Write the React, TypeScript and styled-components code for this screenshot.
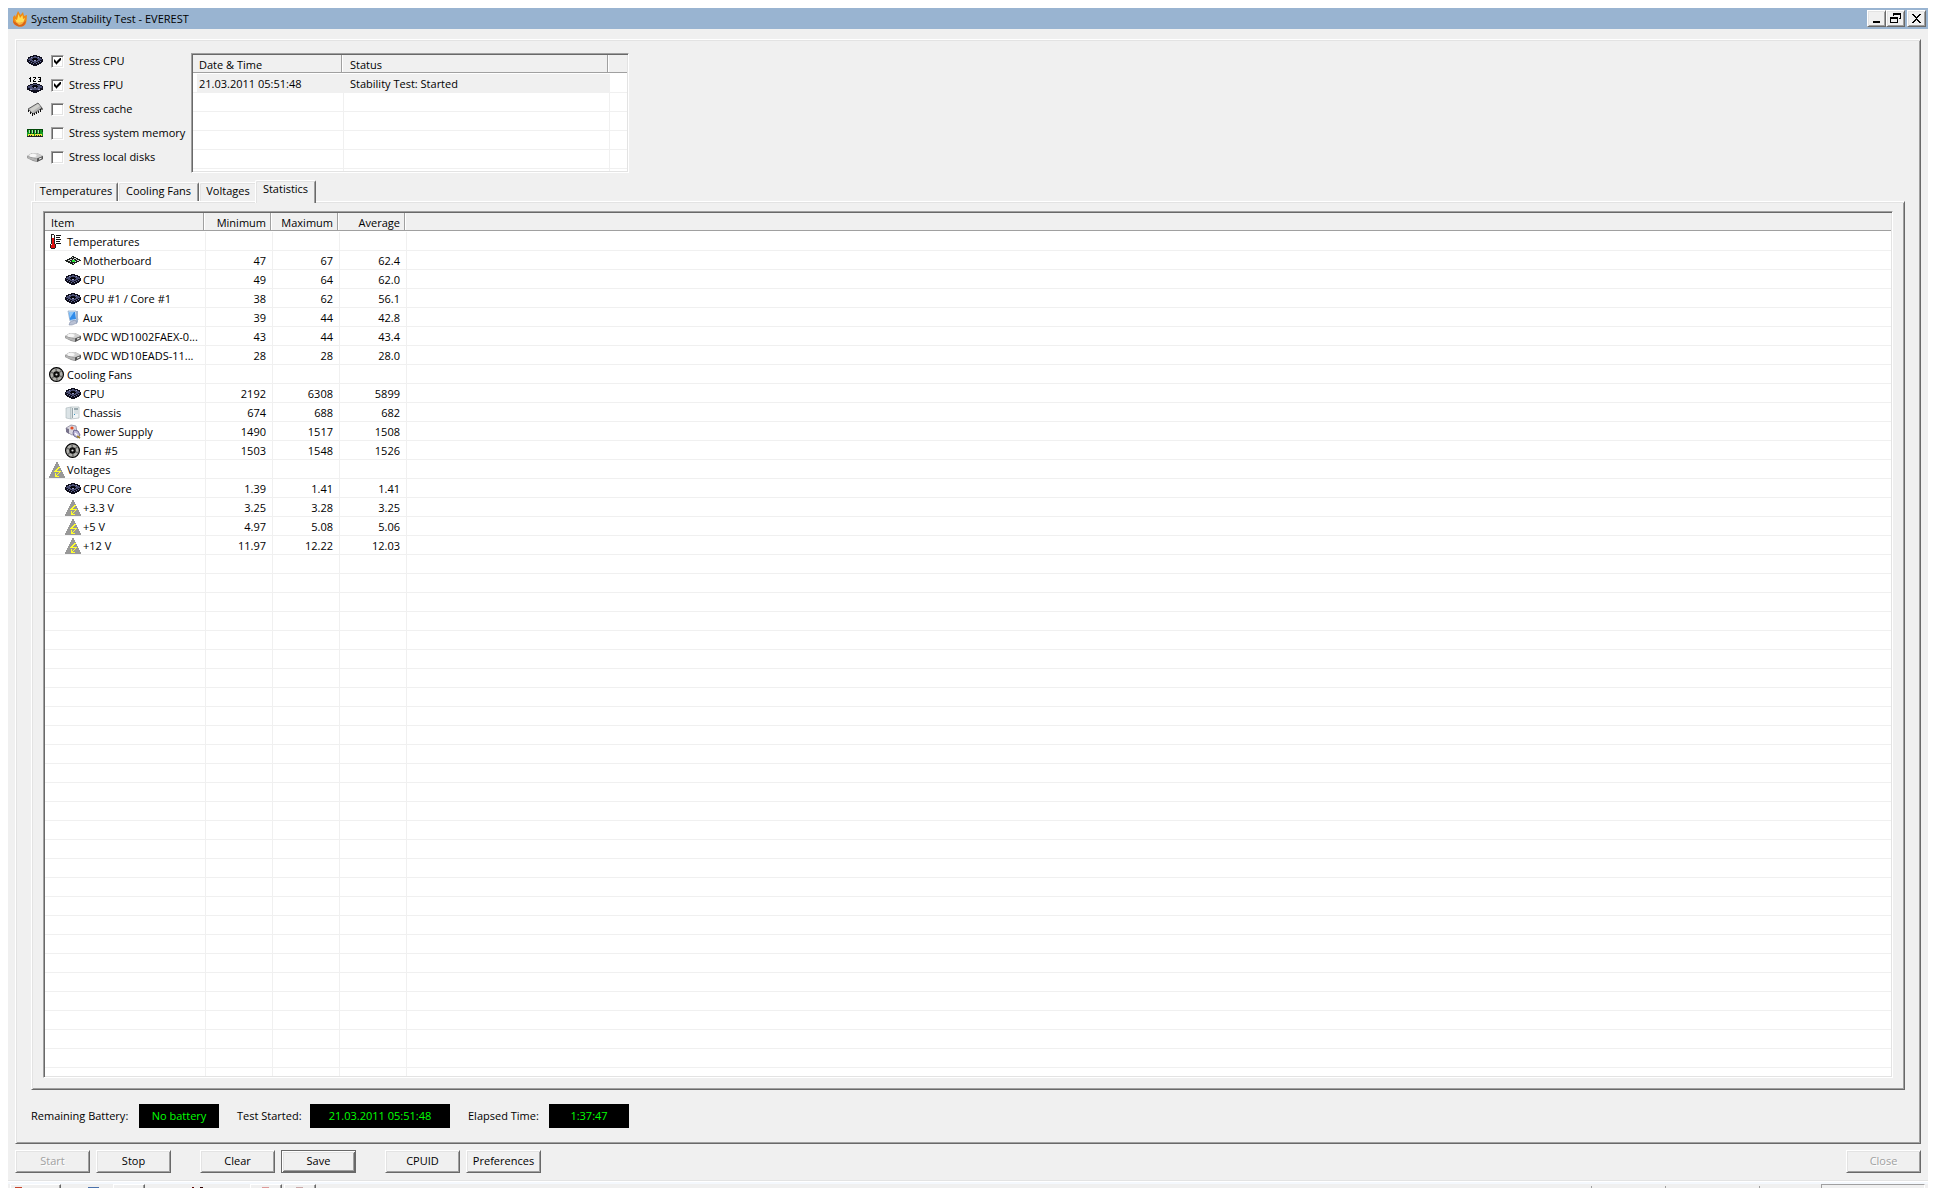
import React from "react";
import styled, { createGlobalStyle, css } from "styled-components";

const face = "#f0f0f0";
const light = "#e3e3e3";
const shade = "#a0a0a0";
const dark = "#696969";

const raised = css`
  border: 1px solid;
  border-color: #fff ${dark} ${dark} #fff;
  box-shadow: inset 1px 1px ${light}, inset -1px -1px ${shade};
`;

const sunken = css`
  border: 1px solid;
  border-color: ${shade} #fff #fff ${shade};
  box-shadow: inset 1px 1px ${dark}, inset -1px -1px ${light};
`;

const GlobalStyle = createGlobalStyle`
  *, *::before, *::after { box-sizing: border-box; }
  body {
    margin: 0;
    background: #fff;
    color: #000;
    font: 11px/18px "Open Sans", "Noto Sans", sans-serif;
  }
  button, input { font: inherit; color: inherit; margin: 0; }
`;

const Desktop = styled.div`
  display: flex;
  flex-direction: column;
  min-height: 100vh;
  padding: 8px 8px 0;
`;

const Window = styled.main`
  flex: 1;
  display: flex;
  flex-direction: column;
  background: ${face};
  border-bottom: 1px solid ${light};
`;

const TitleBar = styled.header`
  display: flex;
  align-items: center;
  height: 21px;
  padding: 0 2px 0 4px;
  background: #99b4d1;
`;

const Title = styled.h1`
  flex: 1;
  margin: 0 0 0 3px;
  font-size: 11px;
  font-weight: 400;
`;

const CaptionButton = styled.button<{ $apart?: boolean }>`
  ${raised}
  display: flex;
  align-items: center;
  justify-content: center;
  width: 19px;
  height: 17px;
  margin-left: ${(p) => (p.$apart ? 2 : 0)}px;
  padding: 0;
  background: ${face};
`;

const Panel = styled.section`
  ${raised}
  flex: 1;
  display: flex;
  flex-direction: column;
  margin: 10px 7px 0;
  padding: 9px 15px 15px;
`;

const Setup = styled.div`
  display: flex;
  padding-bottom: 7px;
`;

const CheckList = styled.div`
  flex: none;
  width: 164px;
  margin-left: -4px;
`;

const CheckRow = styled.div`
  display: flex;
  align-items: center;
  height: 24px;
  white-space: nowrap;
`;

const CheckLabel = styled.label`
  display: flex;
  align-items: center;
  gap: 5px;
  margin-left: 8px;
`;

const CheckBox = styled.input`
  ${sunken}
  appearance: none;
  width: 13px;
  height: 13px;
  padding: 2px;
  background: #fff;

  &:checked::before {
    content: "";
    display: block;
    width: 7px;
    height: 7px;
    background: #000;
    clip-path: polygon(0 2px, 1px 2px, 1px 3px, 2px 3px, 2px 4px, 3px 4px, 3px 3px, 4px 3px, 4px 2px, 5px 2px, 5px 1px, 6px 1px, 6px 0, 7px 0, 7px 3px, 6px 3px, 6px 4px, 5px 4px, 5px 5px, 4px 5px, 4px 6px, 3px 6px, 3px 7px, 2px 7px, 2px 6px, 1px 6px, 1px 5px, 0 5px);
  }
`;

const columnRules = (widths: number[]) => {
  let edge = 0;
  const stops = widths.map((w) => {
    edge += w;
    return `transparent ${edge - 1}px, ${face} ${edge - 1}px ${edge}px, transparent ${edge}px`;
  });
  return `linear-gradient(to right, ${stops.join(", ")})`;
};

const ListView = styled.div<{ $columns: number[] }>`
  ${sunken}
  padding: 1px;
  background-color: #fff;
  background-image: ${(p) => columnRules(p.$columns)},
    repeating-linear-gradient(to bottom, transparent 0 18px, ${face} 18px 19px);
  background-origin: content-box;
  background-clip: content-box;
`;

const LogView = styled(ListView)`
  width: 438px;
  height: 120px;
  margin-top: 4px;
`;

const StatsView = styled(ListView)`
  flex: 1;
`;

const Grid = styled.table`
  width: 100%;
  table-layout: fixed;
  border-collapse: separate;
  border-spacing: 0;
`;

const HeadCell = styled.th<{ $right?: boolean; $last?: boolean }>`
  height: 19px;
  padding: 1px 7px 0 6px;
  font-weight: 400;
  line-height: 18px;
  text-align: ${(p) => (p.$right ? "right" : "left")};
  background-color: ${face};
  background-image: linear-gradient(to top, #fff 1px, ${shade} 1px 2px, transparent 2px)
    ${(p) => !p.$last && css`, linear-gradient(to left, ${face} 1px, #fff 1px 2px, ${shade} 2px 3px, ${face} 3px)`};
`;

const Cell = styled.td<{ $right?: boolean }>`
  height: 19px;
  padding: 0 7px 0 6px;
  overflow: hidden;
  white-space: nowrap;
  text-align: ${(p) => (p.$right ? "right" : "left")};
`;

const LogRow = styled.tr`
  td { background: ${face}; background-clip: padding-box; }
  td:first-child { border-left: 4px solid transparent; padding-left: 2px; }
  td:last-child { background: none; }
`;

const ItemCell = styled(Cell)<{ $child?: boolean }>`
  padding: 0 0 0 ${(p) => (p.$child ? 20 : 4)}px;
`;

const Item = styled.div`
  display: flex;
  align-items: center;
  gap: 2px;
`;

const TabStrip = styled.div`
  position: relative;
  display: flex;
  align-items: flex-end;
  height: 21px;
  padding-left: 3px;
`;

const Tab = styled.button<{ $selected?: boolean; $width: number }>`
  width: ${(p) => p.$width}px;
  height: ${(p) => (p.$selected ? 23 : 19)}px;
  margin: 0 0 ${(p) => (p.$selected ? -2 : 0)}px ${(p) => (p.$selected ? -2 : 0)}px;
  padding: 0 0 ${(p) => (p.$selected ? 6 : 2)}px;
  z-index: ${(p) => (p.$selected ? 1 : 0)};
  border: 0;
  border-top: 1px solid #fff;
  border-left: 1px solid #fff;
  border-right: 1px solid ${dark};
  border-radius: 2px 2px 0 0;
  box-shadow: inset 1px 1px ${light}, inset -1px 0 ${shade};
  background: ${face};
  line-height: 16px;
  white-space: nowrap;
`;

const TabPage = styled.div`
  ${raised}
  flex: 1;
  display: flex;
  flex-direction: column;
  padding: 9px 11px 11px;
`;

const StatusRow = styled.div`
  display: flex;
  align-items: center;
  padding-top: 14px;
`;

const StatusLabel = styled.span<{ $width: number }>`
  width: ${(p) => p.$width}px;
  white-space: nowrap;
`;

const Readout = styled.output<{ $width: number }>`
  width: ${(p) => p.$width}px;
  height: 24px;
  margin-right: 18px;
  background: #000;
  color: #0f0;
  line-height: 23px;
  text-align: center;
`;

const ButtonRow = styled.footer`
  display: flex;
  gap: 6px;
  padding: 6px 7px 7px;
`;

const PushButton = styled.button<{ $gap?: boolean; $end?: boolean; $default?: boolean }>`
  ${raised}
  width: 75px;
  height: 23px;
  margin-left: ${(p) => (p.$end ? "auto" : p.$gap ? "23px" : "0")};
  padding: 0 0 2px;
  background: ${face};
  line-height: 18px;
  white-space: nowrap;
  ${(p) =>
    p.$default &&
    css`
      border-color: ${dark};
      box-shadow: inset 1px 1px #fff, inset -1px -1px ${dark}, inset 2px 2px ${light}, inset -2px -2px ${shade};
    `}
  &:disabled {
    color: ${shade};
    text-shadow: 1px 1px #fff;
  }
`;

const ParentStrip = styled.div`
  display: flex;
  align-items: flex-start;
  height: 7px;
  overflow: hidden;
  padding: 0 3px 0 2px;
  border-top: 1px solid #fff;
  background: linear-gradient(#f4f8fd 2px, ${face} 2px);
`;

const StripButton = styled.div<{ $width: number; $gap?: number; $tint?: string }>`
  flex: none;
  width: ${(p) => p.$width}px;
  height: 10px;
  margin: 2px 0 0 ${(p) => p.$gap ?? 0}px;
  padding: 2px 0 0 ${(p) => (p.$width > 40 ? 4 : 11)}px;
  border: 1px solid;
  border-color: #fff ${dark} ${dark} #fff;
  box-shadow: inset -1px 0 ${shade};

  &::before {
    content: "";
    display: block;
    width: 7px;
    height: 1px;
    background: ${(p) => p.$tint ?? "transparent"};
  }
`;

const StripMark = styled.div<{ $gap: number; $width: number; $tint: string }>`
  flex: none;
  width: ${(p) => p.$width}px;
  height: 1px;
  margin: 5px 0 0 ${(p) => p.$gap}px;
  background: ${(p) => p.$tint};
`;

const StripPane = styled.div<{ $width: number; $end?: boolean; $box?: boolean }>`
  flex: none;
  width: ${(p) => p.$width}px;
  height: 10px;
  margin: ${(p) => (p.$box ? 2 : 4)}px 0 0 ${(p) => (p.$end ? "auto" : "0")};
  border-left: 1px solid ${shade};
  border-top: ${(p) => (p.$box ? `1px solid ${shade}` : 0)};
  border-right: ${(p) => (p.$box ? "1px solid #fff" : 0)};
`;

const Icon = styled.svg.attrs({ width: 16, height: 16, viewBox: "0 0 16 16", "aria-hidden": true })`
  flex: none;
  display: block;
`;

const CpuIcon = () => (
  <Icon shapeRendering="crispEdges">
    <path d="M6 2h4v1h3v1h2v2h1v3h-1v1h-1v1h-2v1h-2v1H6v-1H4v-1H2v-1H1V9H0V6h1V4h2V3h3z" fill="#0e0e1c" />
    <path d="M7 3h2v1h3v1h2v1h1v1h-2v1h-2v1H9v1H7V9H5V8H3V7H1V6h1V5h2V4h3z" fill="#4a4e74" />
    <path d="M6 5h4v1h1v1h-1v1H6V7H5V6h1z" fill="#05050c" />
    <path d="M7 7h2v1H7zM4 4h1v1H4zM11 4h1v1h-1z" fill="#9a9ec4" />
    <path d="M2 8h1v1H2zM4 9h1v1H4zM6 10h1v1H6zM9 10h1v1H9zM11 9h1v1h-1zM13 8h1v1h-1z" fill="#6d72a0" />
  </Icon>
);

const FpuIcon = () => (
  <Icon shapeRendering="crispEdges">
    <path d="M3 0h1v5H3zM2 1h1v1H2zM6 0h3v1H6zM8 1h1v1H8zM7 2h1v1H7zM6 3h1v1H6zM6 4h3v1H6zM11 0h3v1h-3zM13 1h1v3h-1zM12 2h1v1h-1zM11 4h3v1h-3z" fill="#000" />
    <path d="M6 6h4v1h3v1h2v1h1v4h-2v1h-2v1h-2v1H6v-1H4v-1H2v-1H0V9h1V8h2V7h3z" fill="#0e0e1c" />
    <path d="M6 7h4v1h3v1h2v2h-2v1h-2v1H5v-1H3v-1H1V9h2V8h3z" fill="#4a4e74" />
    <path d="M6 8h4v1h1v1h-1v1H6v-1H5V9h1z" fill="#05050c" />
    <path d="M3 12h2v1H3zM11 12h2v1h-2zM7 10h2v1H7z" fill="#9498c0" />
  </Icon>
);

const CacheIcon = () => (
  <Icon>
    <path d="M1 8L11 2l4 5-9 6z" fill="#b5b5b5" stroke="#444" strokeWidth=".8" />
    <path d="M3 8l8-5 2 2-8 6z" fill="#d0d0cc" />
    <path d="M1.500 9v2M3.500 11v2M5.500 12v3M7.500 12v2M9.500 11v2M11.500 10v2M13.500 8v3M15 7v2" stroke="#111" strokeWidth="1" />
  </Icon>
);

const MemoryIcon = () => (
  <Icon shapeRendering="crispEdges">
    <path d="M0 4h16v8H0z" fill="#129a22" />
    <path d="M0 4h16v1H0zM0 4h1v3H0zM15 4h1v3h-1z" fill="#024808" />
    <path d="M3 5h1v4H3zM6 5h1v4H6zM9 5h1v4H9zM12 5h1v4h-1z" fill="#0a2a0a" />
    <path d="M2 5h1v3H2zM5 5h1v3H5zM8 5h1v3H8zM11 5h1v3h-1z" fill="#b4e6b4" />
    <path d="M1 9h6v2H1zM8 9h7v2H8z" fill="#f0e83c" />
    <path d="M2 10h1v1H2zM4 10h1v1H4zM9 10h1v1H9zM11 10h1v1h-1zM13 10h1v1h-1zM0 11h16v1H0z" fill="#222" />
  </Icon>
);

const DiskIcon = () => (
  <Icon>
    <path d="M0 7l5-3h5l6 3v3l-6 3-4-1-6-3z" fill="#8d8d8d" />
    <path d="M0 7l5-3h5l6 3-6 2.500z" fill="#cfcfcf" />
    <ellipse cx="6" cy="6.500" rx="3.600" ry="1.700" fill="#f6f6f6" />
    <path d="M0 7.500l10 2.500v2.500L1 9.500z" fill="#b4b4b4" />
    <path d="M10 9.500l6-2.500v3l-6 3z" fill="#555" />
    <path d="M12 9.600l2.500-1v1.200l-2.500 1z" fill="#eee" />
  </Icon>
);

const BoardIcon = () => (
  <Icon shapeRendering="crispEdges">
    <path d="M7 3h2v1h2v1h2v1h2v1h1v1h-2v1h-2v1h-2v1H9v1H7v-1H5v-1H3V9H1V8H0V7h2V6h2V5h2V4h1z" fill="#1d211e" />
    <path d="M7 4h1v1H7zM5 6h2v1H5zM9 5h2v1H9zM3 7h2v1H3zM12 7h2v1h-2zM10 8h1v1h-1zM5 8h1v1H5zM8 6h1v1H8zM11 6h1v1h-1zM8 10h1v1H8z" fill="#d4d8d5" />
    <path d="M7 7h3v2H7z" fill="#22e233" />
  </Icon>
);

const ThermometerIcon = () => (
  <Icon shapeRendering="crispEdges">
    <path d="M2 0h3v1h1v9h1v4H6v1H2v-1H1v-4h1z" fill="#222" />
    <path d="M3 1h2v9h1v4H2v-4h1z" fill="#fff" />
    <path d="M3 4h2v6h1v4H2v-3h1z" fill="#e01010" />
    <path d="M7 1h5v1H7zM7 3h4v1H7zM7 5h5v1H7zM7 7h4v1H7zM7 9h5v1H7z" fill="#111" />
  </Icon>
);

const MonitorIcon = () => (
  <Icon>
    <path d="M3 1l8 0 2 9-8 1z" fill="#d6e6f6" stroke="#7898be" strokeWidth=".6" />
    <path d="M4 2h6l1 7-6 1z" fill="#2f8bea" />
    <path d="M4 2h5L5 8z" fill="#8cc7fb" />
    <path d="M11 1h2v11l-2 2z" fill="#9fb2cc" />
    <path d="M5 12l5-2 2 3-5 2H4z" fill="#b9c1d4" stroke="#7d88a6" strokeWidth=".5" />
  </Icon>
);

const FanIcon = () => (
  <Icon>
    <circle cx="7.500" cy="7.500" r="6.900" fill="#b0b0ac" stroke="#000" strokeWidth="1.200" />
    <path d="M7.500 7.500L6 1.500l2-.3zM7.500 7.500L12 3l1.200 1.500zM7.500 7.500l6 1.500-.8 1.700zM7.500 7.500l1.500 6-2 .2zM7.500 7.500l-4 4.500-1.200-1.500zM7.500 7.500l-6-1.500.9-1.700z" fill="#6c6c6a" />
    <circle cx="7.500" cy="7.500" r="3.200" fill="#0c0c0c" />
    <circle cx="7.500" cy="7.500" r="1.100" fill="#ddd" />
  </Icon>
);

const ChassisIcon = () => (
  <Icon>
    <path d="M1 3l5-1v12l-5-1z" fill="#dbe3e6" stroke="#a9b5ba" strokeWidth=".6" />
    <path d="M6 2h8v11l-8 1z" fill="#f1f5f6" stroke="#9fabb0" strokeWidth=".6" />
    <path d="M7 3h1v10H7zM9 3h4v2H9z" fill="#98a7ad" />
    <path d="M9 6h4M9 8h4" stroke="#c0ccd0" />
    <path d="M9 9h1v1H9z" fill="#3297c8" />
  </Icon>
);

const PowerIcon = () => (
  <Icon>
    <path d="M1 4l5-3 5 1 1 7-5 2-5-3z" fill="#d9d7df" stroke="#8c889c" strokeWidth=".8" />
    <path d="M1 4l3 1v5L1 8z" fill="#77728a" />
    <circle cx="7" cy="4" r="1.600" fill="#e54a22" />
    <path d="M9 6l4 1 2 4-2 3-4-2-1-3z" fill="#bdb8d8" stroke="#55507c" strokeWidth=".8" />
    <path d="M10 9l3 3" stroke="#fff" strokeWidth="1.200" />
    <path d="M12 12l3 2" stroke="#a38628" strokeWidth="1.600" />
  </Icon>
);

const VoltIcon = () => (
  <Icon shapeRendering="crispEdges">
    <path d="M7 0h2v2h1v2h1v2h1v2h1v2h1v2h1v2h1v2H0v-2h1v-2h1v-2h1V8h1V6h1V4h1V2h1z" fill="#989898" />
    <path d="M9 5h2v1h-1v1H9v1H8v1h4v1h-1v1h-1v1H9v1H8v1h2v1H6v-4h1v2h1v-1h1v-1h1v-1H5V9h1V8h1V7h1V6h1z" fill="#ffff2e" />
  </Icon>
);

const FlameIcon = () => (
  <Icon>
    <path d="M1 6l2-2 .5 2L6 0l2.500 4L11 1l1 4 3-1c-.5 3 0 5-1 8s-4 4-7 3.500S1 13 1 10z" fill="#f08a14" />
    <path d="M3 8l2 1 1.500-6 1.500 4 2.500-3 .5 4 2-1-2 5H5z" fill="#ffdf58" />
    <path d="M1 9c2 4 7 4 13 1-1 5-4 6-7 5.500S1 13 1 9z" fill="#d8641a" />
    <path d="M3 10c3 2 6 2 9 .5-1 2.500-3 3.500-5 3.500z" fill="#f9b541" />
  </Icon>
);

const stressOptions = [
  { id: "cpu", label: "Stress CPU", icon: CpuIcon, on: true },
  { id: "fpu", label: "Stress FPU", icon: FpuIcon, on: true },
  { id: "cache", label: "Stress cache", icon: CacheIcon, on: false },
  { id: "memory", label: "Stress system memory", icon: MemoryIcon, on: false },
  { id: "disks", label: "Stress local disks", icon: DiskIcon, on: false },
];

const tabs = [
  { label: "Temperatures", width: 84 },
  { label: "Cooling Fans", width: 81 },
  { label: "Voltages", width: 58 },
  { label: "Statistics", width: 61 },
];

type Reading = { name: string; icon: React.ComponentType; values?: [string, string, string] };

const readings: Reading[] = [
  { name: "Temperatures", icon: ThermometerIcon },
  { name: "Motherboard", icon: BoardIcon, values: ["47", "67", "62.4"] },
  { name: "CPU", icon: CpuIcon, values: ["49", "64", "62.0"] },
  { name: "CPU #1 / Core #1", icon: CpuIcon, values: ["38", "62", "56.1"] },
  { name: "Aux", icon: MonitorIcon, values: ["39", "44", "42.8"] },
  { name: "WDC WD1002FAEX-0...", icon: DiskIcon, values: ["43", "44", "43.4"] },
  { name: "WDC WD10EADS-11...", icon: DiskIcon, values: ["28", "28", "28.0"] },
  { name: "Cooling Fans", icon: FanIcon },
  { name: "CPU", icon: CpuIcon, values: ["2192", "6308", "5899"] },
  { name: "Chassis", icon: ChassisIcon, values: ["674", "688", "682"] },
  { name: "Power Supply", icon: PowerIcon, values: ["1490", "1517", "1508"] },
  { name: "Fan #5", icon: FanIcon, values: ["1503", "1548", "1526"] },
  { name: "Voltages", icon: VoltIcon },
  { name: "CPU Core", icon: CpuIcon, values: ["1.39", "1.41", "1.41"] },
  { name: "+3.3 V", icon: VoltIcon, values: ["3.25", "3.28", "3.25"] },
  { name: "+5 V", icon: VoltIcon, values: ["4.97", "5.08", "5.06"] },
  { name: "+12 V", icon: VoltIcon, values: ["11.97", "12.22", "12.03"] },
];

const logColumns = [151, 266];
const statColumns = [161, 67, 67, 67];

const Columns = ({ widths }: { widths: number[] }) => (
  <colgroup>
    {widths.map((w, i) => (
      <col key={i} width={w} />
    ))}
    <col />
  </colgroup>
);

export default function App() {
  return (
    <>
      <GlobalStyle />
      <Desktop>
        <Window>
          <TitleBar>
            <FlameIcon />
            <Title>System Stability Test - EVEREST</Title>
            <CaptionButton aria-label="Minimize">
              <svg width="11" height="11" shapeRendering="crispEdges"><path d="M2 8h7v2H2z" /></svg>
            </CaptionButton>
            <CaptionButton aria-label="Restore">
              <svg width="11" height="11" shapeRendering="crispEdges">
                <path d="M3 0h8v6H9V5h1V2H4v1H3zM0 4h8v6H0zM1 6v3h6V6z" fillRule="evenodd" />
              </svg>
            </CaptionButton>
            <CaptionButton aria-label="Close window" $apart>
              <svg width="11" height="11" shapeRendering="crispEdges">
                <path d="M1 1h2v1h1v1h1v1h1V3h1V2h1V1h2v1H9v1H8v1H7v1H6v1h1v1h1v1h1v1h1v1H8V9H7V8H6V7H5v1H4v1H3v1H1V9h1V8h1V7h1V6h1V5H4V4H3V3H2V2H1z" />
              </svg>
            </CaptionButton>
          </TitleBar>

          <Panel>
            <Setup>
              <CheckList>
                {stressOptions.map(({ id, label, icon: Glyph, on }) => (
                  <CheckRow key={id}>
                    <Glyph />
                    <CheckLabel htmlFor={id}>
                      <CheckBox type="checkbox" id={id} defaultChecked={on} />
                      {label}
                    </CheckLabel>
                  </CheckRow>
                ))}
              </CheckList>
              <LogView $columns={logColumns}>
                <Grid>
                  <Columns widths={logColumns} />
                  <thead>
                    <tr>
                      <HeadCell>Date &amp; Time</HeadCell>
                      <HeadCell>Status</HeadCell>
                      <HeadCell $last />
                    </tr>
                  </thead>
                  <tbody>
                    <LogRow>
                      <Cell>21.03.2011 05:51:48</Cell>
                      <Cell>Stability Test: Started</Cell>
                      <Cell />
                    </LogRow>
                  </tbody>
                </Grid>
              </LogView>
            </Setup>

            <TabStrip role="tablist">
              {tabs.map((t) => (
                <Tab key={t.label} role="tab" $width={t.width} $selected={t.label === "Statistics"} aria-selected={t.label === "Statistics"}>
                  {t.label}
                </Tab>
              ))}
            </TabStrip>
            <TabPage role="tabpanel">
              <StatsView $columns={statColumns}>
                <Grid>
                  <Columns widths={statColumns} />
                  <thead>
                    <tr>
                      <HeadCell>Item</HeadCell>
                      <HeadCell $right>Minimum</HeadCell>
                      <HeadCell $right>Maximum</HeadCell>
                      <HeadCell $right>Average</HeadCell>
                      <HeadCell $last />
                    </tr>
                  </thead>
                  <tbody>
                    {readings.map(({ name, icon: Glyph, values }, i) => (
                      <tr key={i}>
                        <ItemCell $child={!!values}>
                          <Item>
                            <Glyph />
                            {name}
                          </Item>
                        </ItemCell>
                        {(values ?? ["", "", ""]).map((v, j) => (
                          <Cell key={j} $right>{v}</Cell>
                        ))}
                        <Cell />
                      </tr>
                    ))}
                  </tbody>
                </Grid>
              </StatsView>
            </TabPage>

            <StatusRow>
              <StatusLabel $width={108}>Remaining Battery:</StatusLabel>
              <Readout $width={80}>No battery</Readout>
              <StatusLabel $width={73}>Test Started:</StatusLabel>
              <Readout $width={140}>21.03.2011 05:51:48</Readout>
              <StatusLabel $width={81}>Elapsed Time:</StatusLabel>
              <Readout $width={80}>1:37:47</Readout>
            </StatusRow>
          </Panel>

          <ButtonRow>
            <PushButton disabled>Start</PushButton>
            <PushButton>Stop</PushButton>
            <PushButton $gap>Clear</PushButton>
            <PushButton $default>Save</PushButton>
            <PushButton $gap>CPUID</PushButton>
            <PushButton>Preferences</PushButton>
            <PushButton disabled $end>Close</PushButton>
          </ButtonRow>
        </Window>
        <ParentStrip aria-hidden="true">
          <StripButton $width={51} $tint="#c8452c" />
          <StripMark $gap={27} $width={11} $tint="#4a72ac" />
          <StripButton $width={32} $gap={14} />
          <StripMark $gap={47} $width={2} $tint="#5a0000" />
          <StripMark $gap={6} $width={3} $tint="#300000" />
          <StripButton $width={32} $gap={47} $tint="#dd9a9a" />
          <StripButton $width={32} $gap={2} $tint="#c9a8a8" />
          <StripPane $width={74} $end />
          <StripPane $width={94} />
          <StripPane $width={62} />
          <StripPane $width={104} $box />
        </ParentStrip>
      </Desktop>
    </>
  );
}
